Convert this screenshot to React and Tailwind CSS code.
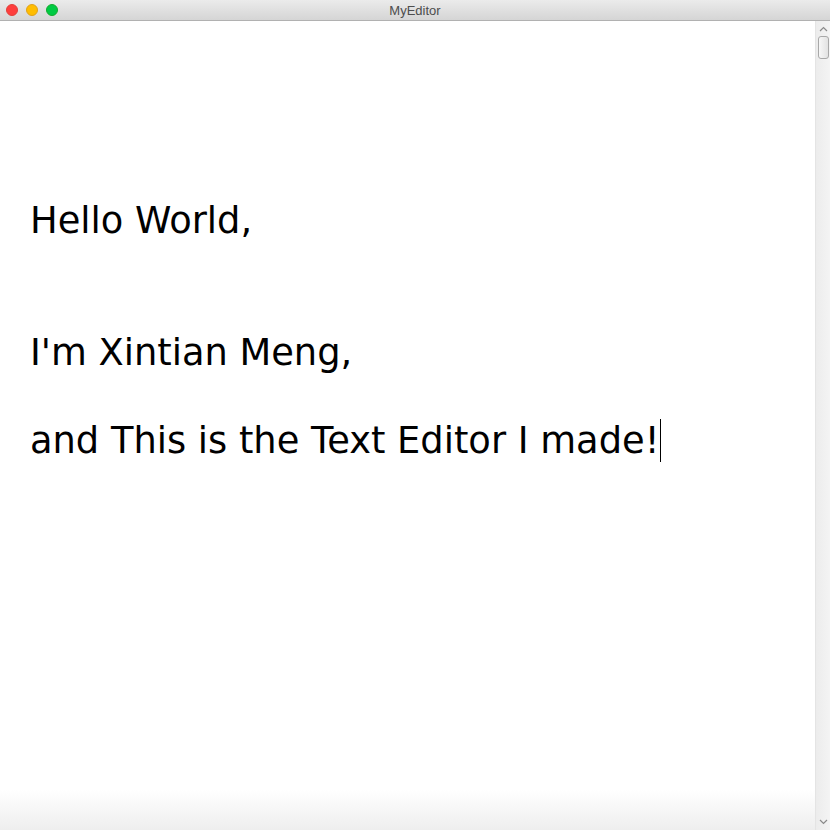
import React from "react";

const lines = ["Hello World,", "", "", "I'm Xintian Meng,", "", "and This is the Text Editor I made!"];

const TitleBar = () => (
  <div className="relative flex items-center justify-center h-[21px] border-b border-[#b1b1b1] bg-gradient-to-b from-[#ebebeb] to-[#d5d5d5]">
    <div className="absolute left-[6px] top-[4px] flex items-center gap-[8px]">
      <span className="w-[12px] h-[12px] rounded-full bg-[#fe3e3d] border border-[#e2403a]" />
      <span className="w-[12px] h-[12px] rounded-full bg-[#ffbd00] border border-[#e1a217]" />
      <span className="w-[12px] h-[12px] rounded-full bg-[#00ca43] border border-[#13ac2d]" />
    </div>
    <div className="text-[13px] text-[#4d4d4d] leading-none" style={{ fontFamily: '"Liberation Sans", Arial, sans-serif' }}>
      MyEditor
    </div>
  </div>
);

const ScrollBar = () => (
  <div className="flex flex-col items-center w-[15px] bg-gradient-to-r from-[#ececec] to-[#f4f4f4] border-l border-[#e4e4e4]">
    <svg width="9" height="6" viewBox="0 0 9 6" className="mt-[5px]">
      <path d="M1 5 L4.5 1.5 L8 5" fill="none" stroke="#8a8a8a" strokeWidth="1.2" />
    </svg>
    <div className="mt-[4px] w-[11px] h-[23px] rounded-[3px] border border-[#a8a8a8] bg-gradient-to-r from-[#f7f7f7] to-[#e2e2e2]" />
    <div className="flex-1" />
    <svg width="9" height="6" viewBox="0 0 9 6" className="mb-[5px]">
      <path d="M1 1 L4.5 4.5 L8 1" fill="none" stroke="#8a8a8a" strokeWidth="1.2" />
    </svg>
  </div>
);

export default function App() {
  return (
    <div className="w-[830px] h-[830px] flex flex-col bg-white overflow-hidden">
      <TitleBar />
      <div className="flex flex-1 min-h-0">
        <div className="relative flex-1 bg-white">
          <div
            className="pt-[178px] pl-[30px] text-[36.8px] leading-[44px] text-black"
            style={{ fontFamily: '"DejaVu Sans", Verdana, sans-serif' }}
          >
            {lines.map((l, i) => (
              <div key={i} className="h-[44px] whitespace-pre flex items-start">
                {l}
                {i === lines.length - 1 && <span className="inline-block w-px h-[43px] bg-black ml-[1px]" />}
              </div>
            ))}
          </div>
          <div className="absolute left-0 right-0 bottom-0 h-[40px] bg-gradient-to-b from-transparent to-[#eeeeee]" />
        </div>
        <ScrollBar />
      </div>
    </div>
  );
}
